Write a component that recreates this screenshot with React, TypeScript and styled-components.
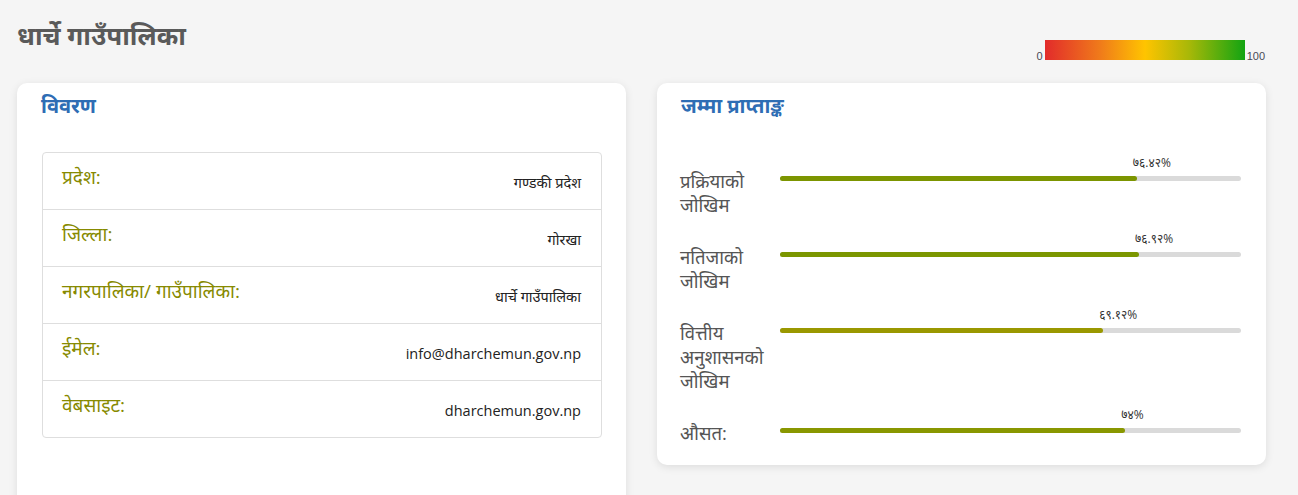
import React from "react";
import styled, { createGlobalStyle } from "styled-components";

const GlobalStyle = createGlobalStyle`
  html, body {
    margin: 0;
    padding: 0;
    background: #f5f5f5;
    font-family: "Open Sans", "Noto Sans", sans-serif;
    color: #333;
  }
  * { box-sizing: border-box; }
`;

const Page = styled.div`
  padding: 14px 32px 0 17px;
  min-height: 495px;
`;

const Header = styled.div`
  display: flex;
  justify-content: space-between;
  align-items: flex-start;
  height: 69px;
`;

const Title = styled.h1`
  margin: 0;
  font-size: 26px;
  line-height: 42px;
  font-weight: 700;
  color: #5a5a5a;
`;

const Legend = styled.div`
  display: flex;
  align-items: flex-end;
  gap: 2px;
  margin-top: 26px;
  margin-right: 1px;
`;

const LegendNum = styled.span`
  font-family: "Liberation Sans", Arial, sans-serif;
  font-size: 11px;
  line-height: 11px;
  color: #4a4a55;
  margin-bottom: -2px;
`;

const GradientBar = styled.div`
  width: 200px;
  height: 20px;
  background: linear-gradient(
    to right,
    #e22b2b 0%,
    #f07c1a 28%,
    #ffc400 50%,
    #a8b808 72%,
    #12a412 100%
  );
`;

const Columns = styled.div`
  display: grid;
  grid-template-columns: 1fr 1fr;
  gap: 31px;
  align-items: start;
`;

const Card = styled.section<{ $tall?: boolean }>`
  background: #fff;
  border-radius: 10px;
  box-shadow: 0 2px 8px rgba(0, 0, 0, 0.1);
  padding: ${(p) => (p.$tall ? "10px 24px 19px 24px" : "10px 25px 20px 23px")};
  min-height: ${(p) => (p.$tall ? "430px" : "auto")};
`;

const CardTitle = styled.h2<{ $indent?: boolean }>`
  margin: 0 0 0 ${(p) => (p.$indent ? "1px" : "0")};
  font-size: 20px;
  line-height: 26px;
  font-weight: 700;
  color: #2e6db4;
`;

const InfoTable = styled.div`
  margin-top: 33px;
  border: 1px solid #dedede;
  border-radius: 4px;
  margin-left: 1px;
  margin-right: 0;
`;

const InfoRow = styled.div`
  display: flex;
  justify-content: space-between;
  align-items: flex-start;
  height: 56px;
  padding: 10px 20px 0 19px;
  & + & {
    height: 57px;
    border-top: 1px solid #dedede;
  }
`;

const InfoLabel = styled.span`
  font-size: 19px;
  line-height: 28px;
  color: #878a00;
`;

const InfoValue = styled.span`
  font-size: 14.5px;
  line-height: 20px;
  margin-top: 10px;
  color: #222;
`;

const ScoreList = styled.div`
  display: flex;
  flex-direction: column;
  gap: 11px;
  margin-top: 33px;
`;

const ScoreRow = styled.div`
  display: grid;
  grid-template-columns: 100px 1fr;
  align-items: start;
`;

const ScoreLabel = styled.div`
  font-size: 18.5px;
  line-height: 24px;
  color: #555;
  margin-top: 17px;
  white-space: nowrap;
`;

const BarArea = styled.div`
  position: relative;
  padding-top: 24px;
`;

const Track = styled.div`
  height: 5px;
  border-radius: 3px;
  background: #dadada;
`;

const Fill = styled.div<{ $color: string }>`
  height: 100%;
  border-radius: 3px;
  background: ${(p) => p.$color};
`;

const ValueTag = styled.span`
  position: absolute;
  top: 3px;
  transform: translateX(-4px);
  font-size: 12px;
  line-height: 16px;
  color: #333;
  white-space: nowrap;
`;

const info = [
  { label: "प्रदेश:", value: "गण्डकी प्रदेश" },
  { label: "जिल्ला:", value: "गोरखा" },
  { label: "नगरपालिका/ गाउँपालिका:", value: "धार्चे गाउँपालिका" },
  { label: "ईमेल:", value: "info@dharchemun.gov.np" },
  { label: "वेबसाइट:", value: "dharchemun.gov.np" },
];

const scores = [
  { lines: ["प्रक्रियाको", "जोखिम"], pct: 77.4, text: "७६.४२%", color: "#7c9500" },
  { lines: ["नतिजाको", "जोखिम"], pct: 77.9, text: "७६.९२%", color: "#7b9600" },
  { lines: ["वित्तीय", "अनुशासनको", "जोखिम"], pct: 70.1, text: "६९.१२%", color: "#9a9800" },
  { lines: ["औसत:"], pct: 74.9, text: "७४%", color: "#899700" },
];

export default function App() {
  return (
    <>
      <GlobalStyle />
      <Page>
        <Header>
          <Title>धार्चे गाउँपालिका</Title>
          <Legend>
            <LegendNum>0</LegendNum>
            <GradientBar />
            <LegendNum>100</LegendNum>
          </Legend>
        </Header>
        <Columns>
          <Card $tall>
            <CardTitle>विवरण</CardTitle>
            <InfoTable>
              {info.map((r) => (
                <InfoRow key={r.label}>
                  <InfoLabel>{r.label}</InfoLabel>
                  <InfoValue>{r.value}</InfoValue>
                </InfoRow>
              ))}
            </InfoTable>
          </Card>
          <Card>
            <CardTitle $indent>जम्मा प्राप्ताङ्क</CardTitle>
            <ScoreList>
              {scores.map((s) => (
                <ScoreRow key={s.text}>
                  <ScoreLabel>
                    {s.lines.map((l) => (
                      <div key={l}>{l}</div>
                    ))}
                  </ScoreLabel>
                  <BarArea>
                    <ValueTag style={{ left: `${s.pct}%` }}>{s.text}</ValueTag>
                    <Track>
                      <Fill $color={s.color} style={{ width: `${s.pct}%` }} />
                    </Track>
                  </BarArea>
                </ScoreRow>
              ))}
            </ScoreList>
          </Card>
        </Columns>
      </Page>
    </>
  );
}
